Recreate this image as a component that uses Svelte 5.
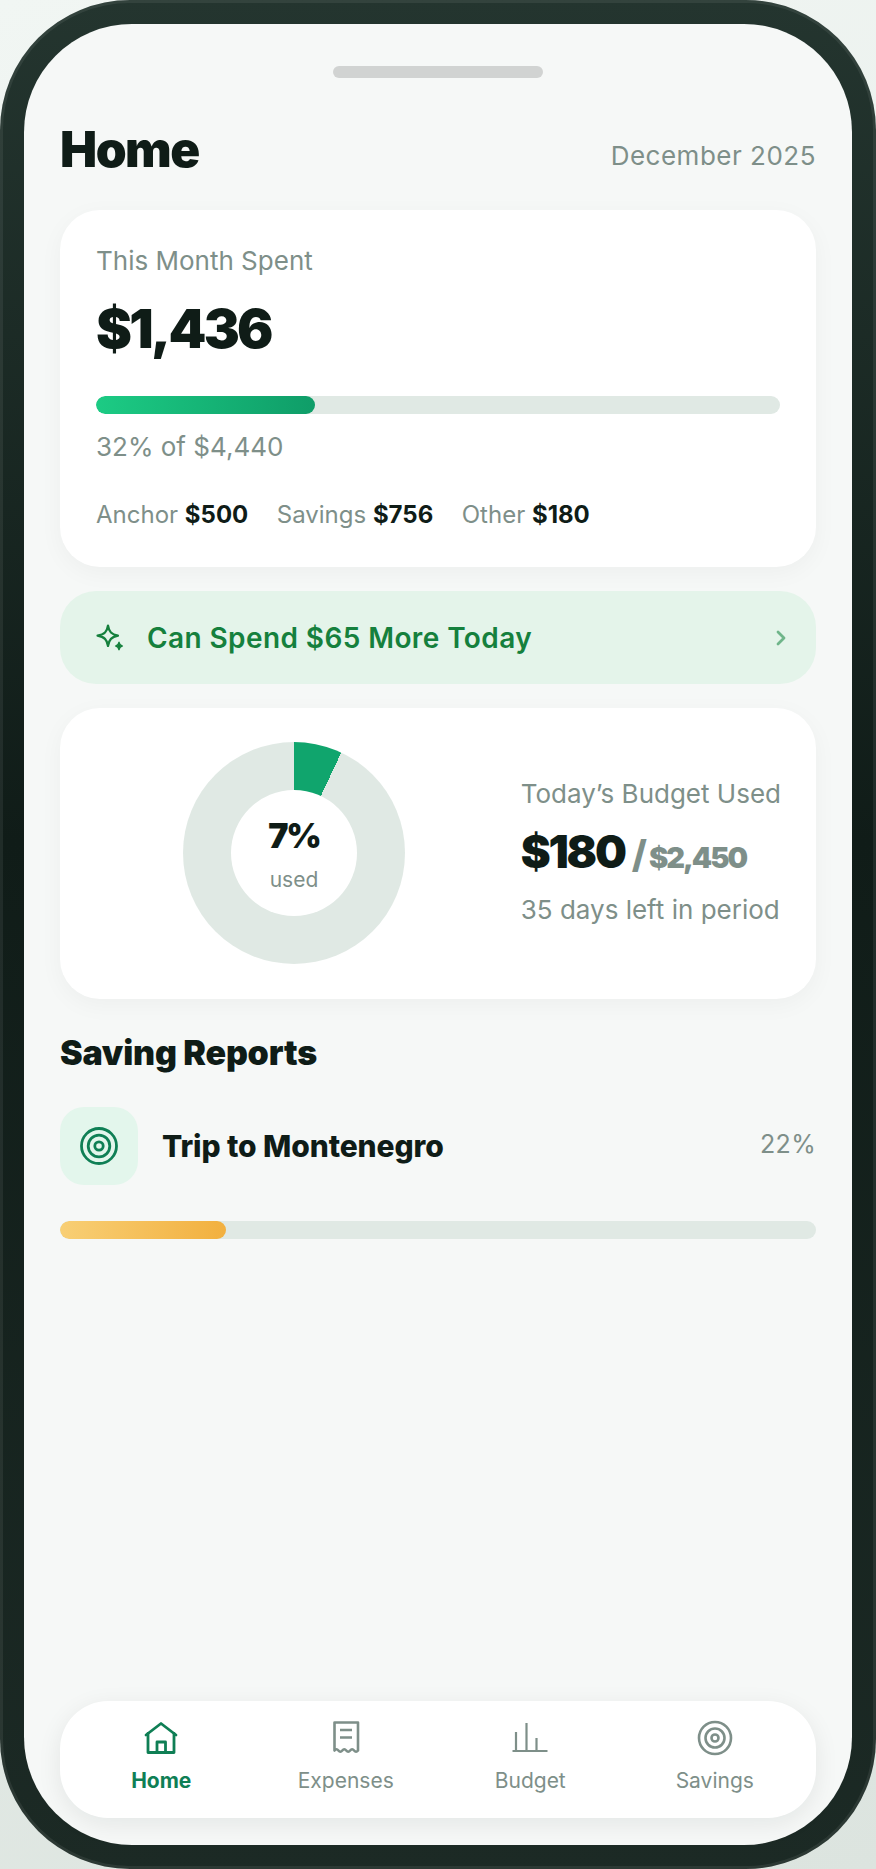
<script>
	const split = [
		{ label: 'Anchor', value: '$500' },
		{ label: 'Savings', value: '$756' },
		{ label: 'Other', value: '$180' }
	];
	const tabs = ['Home', 'Expenses', 'Budget', 'Savings'];
</script>

<div class="page">
	<div class="phone">
		<div class="screen">
			<div class="handle"></div>

			<header class="top">
				<h1>Home</h1>
				<span class="date">December 2025</span>
			</header>

			<section class="card month">
				<div class="muted label">This Month Spent</div>
				<div class="amount">$1,436</div>
				<div class="track"><div class="fill green" style="width: 32%"></div></div>
				<div class="muted pct">32% of $4,440</div>
				<div class="split">
					{#each split as s}
						<span>{s.label} <b>{s.value}</b></span>
					{/each}
				</div>
			</section>

			<div class="banner">
				<svg class="spark" viewBox="0 0 28 28" width="28" height="28" fill="none" stroke="#15803d" stroke-width="2.200" stroke-linejoin="round">
					<path d="M12 1.500c1 6.500 3.500 9 10 10.200-6.500 1.200-9 3.800-10 10.300-1-6.500-3.500-9.100-10.500-10.300 7-1.200 9.500-3.700 10.500-10.200z" />
					<path d="M23 18c.5 2.500 1.300 3.400 3.500 4-2.200.6-3 1.500-3.500 4-.5-2.500-1.300-3.400-3.500-4 2.200-.6 3-1.500 3.500-4z" fill="#15803d" stroke-width="1.200" />
				</svg>
				<span class="banner-text">Can Spend $65 More Today</span>
				<svg class="chev" viewBox="0 0 10 16" width="10" height="16" fill="none" stroke="#6fb58a" stroke-width="2.800" stroke-linecap="round" stroke-linejoin="round">
					<path d="M2 2 8 8l-6 6" />
				</svg>
			</div>

			<section class="card today">
				<div class="donut">
					<div class="hole">
						<span class="donut-pct">7%</span>
						<span class="muted donut-used">used</span>
					</div>
				</div>
				<div class="today-info">
					<div class="muted label">Today’s Budget Used</div>
					<div class="today-amount"><span class="big">$180</span><span class="slash">/</span><span class="of">$2,450</span></div>
					<div class="muted label">35 days left in period</div>
				</div>
			</section>

			<h2>Saving Reports</h2>

			<div class="goal">
				<div class="goal-icon">
					<svg viewBox="0 0 38 38" width="38" height="38" fill="none" stroke="#0f7f55" stroke-width="2.800">
						<circle cx="19" cy="19" r="17.500" />
						<circle cx="19" cy="19" r="10.800" />
						<circle cx="19" cy="19" r="4.200" />
					</svg>
				</div>
				<span class="goal-name">Trip to Montenegro</span>
				<span class="muted goal-pct">22%</span>
			</div>
			<div class="track goal-track"><div class="fill amber" style="width: 22%"></div></div>

			<nav class="tabs">
				{#each tabs as tab, i}
					<div class="tab" class:active={i === 0}>
						{#if i === 0}
							<svg viewBox="0 0 36 36" width="36" height="36" fill="none" stroke="currentColor" stroke-width="2.800" stroke-linecap="round" stroke-linejoin="round">
								<path d="M3 15 18 3.500 33 15" />
								<path d="M5 13.500V32.500H31V13.500" />
								<path d="M14 32.500V22H22.500V32.500" />
							</svg>
						{:else if i === 1}
							<svg viewBox="0 0 36 36" width="36" height="36" fill="none" stroke="currentColor" stroke-width="2.600" stroke-linejoin="round">
								<path d="M6.500 30.500V2.500H30v28q-1.960 2.500-3.920 0t-3.920 0t-3.920 0t-3.920 0t-3.920 0t-3.900 0z" />
								<path d="M12 10h12M12 17.500h12" />
							</svg>
						{:else if i === 2}
							<svg viewBox="0 0 36 36" width="36" height="36" fill="none" stroke="currentColor" stroke-width="2.200" stroke-linecap="butt">
								<path d="M0.500 31H35.500" />
								<path d="M4 31V12M14.500 31V3M24.500 31V18" />
							</svg>
						{:else}
							<svg viewBox="0 0 36 36" width="36" height="36" fill="none" stroke="currentColor" stroke-width="2.600">
								<circle cx="18" cy="18" r="16" />
								<circle cx="18" cy="18" r="9.500" />
								<circle cx="18" cy="18" r="3.500" />
							</svg>
						{/if}
						<span>{tab}</span>
					</div>
				{/each}
			</nav>
		</div>
	</div>
</div>

<style>
	:global(body) {
		margin: 0;
		font-family: Inter, "Liberation Sans", sans-serif;
		color: #0f1c17;
	}

	.page {
		height: 1869px;
		background: linear-gradient(160deg, #f1f6f3, #dce4df);
	}

	.phone {
		box-sizing: border-box;
		height: 1869px;
		padding: 24px;
		border-radius: 130px;
		background: linear-gradient(180deg, #24352f 0%, #101c18 45%, #1c2a25 100%);
		box-shadow: inset 0 0 0 3px rgba(255, 255, 255, 0.07);
	}

	.screen {
		box-sizing: border-box;
		height: 100%;
		display: flex;
		flex-direction: column;
		padding: 42px 36px 27px;
		border-radius: 108px;
		background: #f6f8f7;
	}

	.handle {
		align-self: center;
		width: 210px;
		height: 12px;
		border-radius: 6px;
		background: #d1d3d2;
	}

	.top {
		display: flex;
		justify-content: space-between;
		align-items: flex-end;
		margin-top: 44px;
		height: 58px;
	}

	h1 {
		margin: 0 0 4px;
		font-size: 49.500px;
		font-weight: 900;
		letter-spacing: -1.500px;
		line-height: 54px;
	}

	.date {
		font-size: 26px;
		letter-spacing: 0.500px;
		color: #7e8f89;
		line-height: 32px;
		padding-bottom: 8px;
	}

	.muted {
		color: #7e8f89;
	}

	.card {
		background: #fff;
		border-radius: 40px;
		box-shadow: 0 6px 24px rgba(15, 28, 23, 0.04);
	}

	.month {
		box-sizing: border-box;
		height: 357px;
		margin-top: 30px;
		padding: 35px 36px 0;
	}

	.label {
		font-size: 26px;
		line-height: 32px;
	}

	.amount {
		margin-top: 21px;
		font-size: 54px;
		font-weight: 900;
		line-height: 62px;
		letter-spacing: -2.700px;
	}

	.track {
		height: 18px;
		border-radius: 9px;
		background: #e0e9e4;
		overflow: hidden;
	}

	.month .track {
		margin-top: 36px;
	}

	.fill {
		height: 100%;
		border-radius: 9px;
	}

	.green {
		background: linear-gradient(90deg, #1ccb84, #0f9d68);
	}

	.amber {
		background: linear-gradient(90deg, #f8cf75, #f2b03f);
	}

	.pct {
		margin-top: 17px;
		font-size: 26px;
		line-height: 32px;
	}

	.split {
		display: flex;
		gap: 28.500px;
		margin-top: 36px;
		font-size: 24px;
		line-height: 32px;
		color: #7e8f89;
	}

	.split b {
		color: #0f1c17;
		font-weight: 700;
	}

	.banner {
		box-sizing: border-box;
		height: 93px;
		margin-top: 24px;
		padding: 0 30px 0 36px;
		display: flex;
		align-items: center;
		border-radius: 36px;
		background: #e4f4ea;
	}

	.banner-text {
		margin-left: 23px;
		font-size: 28px;
		font-weight: 600;
		letter-spacing: 0.400px;
		color: #15803d;
	}

	.chev {
		margin-left: auto;
	}

	.today {
		box-sizing: border-box;
		height: 291px;
		margin-top: 24px;
		padding: 0 35px 2px 123px;
		display: flex;
		align-items: center;
		justify-content: space-between;
	}

	.donut {
		width: 222px;
		height: 222px;
		border-radius: 50%;
		background: conic-gradient(#10a56d 0 25.200deg, #e0e9e4 25.200deg);
		display: flex;
		align-items: center;
		justify-content: center;
	}

	.hole {
		box-sizing: border-box;
		width: 126px;
		height: 126px;
		padding-top: 4px;
		border-radius: 50%;
		background: #fff;
		display: flex;
		flex-direction: column;
		align-items: center;
		justify-content: center;
	}

	.donut-pct {
		font-size: 34px;
		font-weight: 900;
		line-height: 40px;
		letter-spacing: -2px;
	}

	.donut-used {
		font-size: 21px;
		line-height: 26px;
		margin-top: 11px;
	}

	.today-info {
		margin-top: -2px;
	}

	.today-amount {
		display: flex;
		align-items: baseline;
		gap: 6px;
		margin: 6px 0;
		height: 72px;
		line-height: 72px;
	}

	.big {
		font-size: 45px;
		font-weight: 900;
		letter-spacing: -2.200px;
	}

	.slash {
		margin: 0 -4px 0 1px;
		font-size: 38px;
		font-weight: 800;
		color: #7e8f89;
	}

	.of {
		font-size: 29px;
		font-weight: 900;
		letter-spacing: -2px;
		color: #7e8f89;
	}

	h2 {
		margin: 32px 0 0;
		font-size: 34px;
		font-weight: 900;
		letter-spacing: -0.200px;
		line-height: 44px;
	}

	.goal {
		margin-top: 32px;
		display: flex;
		align-items: center;
	}

	.goal-icon {
		width: 78px;
		height: 78px;
		border-radius: 24px;
		background: #e3f6ec;
		display: flex;
		align-items: center;
		justify-content: center;
	}

	.goal-name {
		margin-left: 24px;
		font-size: 30px;
		font-weight: 800;
		letter-spacing: -0.100px;
	}

	.goal-pct {
		margin-left: auto;
		margin-bottom: 4px;
		font-size: 25px;
		letter-spacing: 0.300px;
	}

	.goal-track {
		margin-top: 36px;
	}

	.tabs {
		box-sizing: border-box;
		height: 117px;
		margin-top: auto;
		padding: 0 9px;
		display: flex;
		border-radius: 48px;
		background: #fff;
		box-shadow: 0 6px 24px rgba(15, 28, 23, 0.08);
	}

	.tab {
		flex: 1;
		display: flex;
		flex-direction: column;
		align-items: center;
		padding-top: 19px;
		gap: 11px;
		font-size: 21px;
		line-height: 28px;
		color: #7e8f89;
	}

	.tab.active {
		color: #0f7f55;
		font-weight: 700;
	}
</style>
